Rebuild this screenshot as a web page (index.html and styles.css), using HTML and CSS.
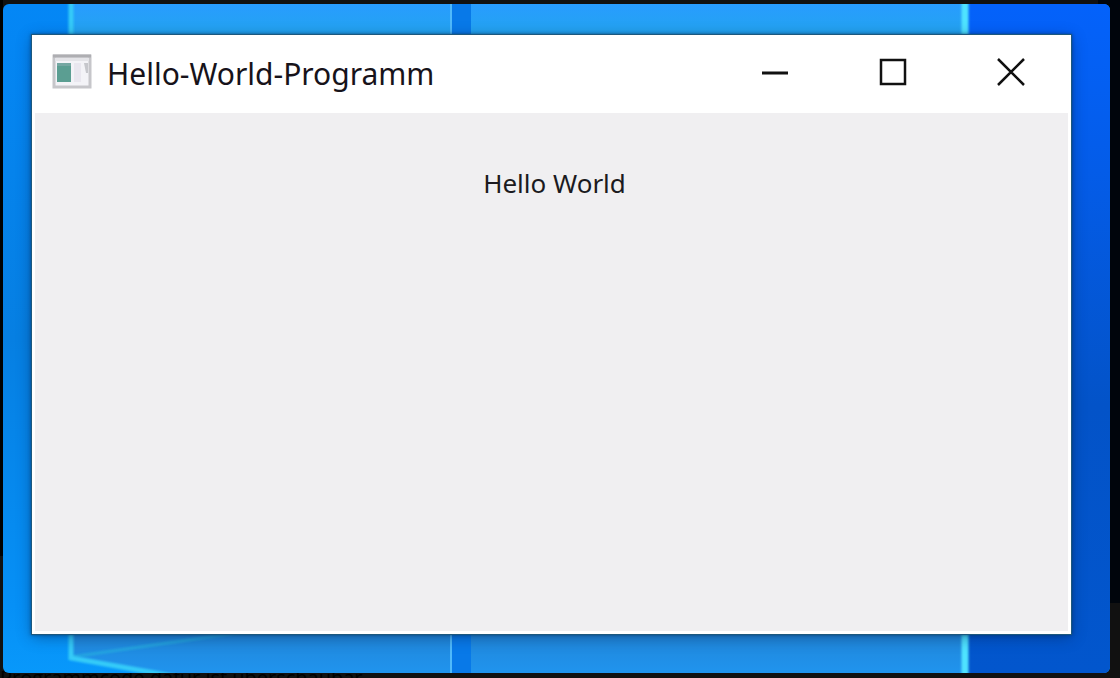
FILE: index.html
```html
<!DOCTYPE html>
<html lang="de">
<head>
<meta charset="utf-8">
<meta name="viewport" content="width=device-width, initial-scale=1">
<title>Hello-World-Programm</title>
<link rel="stylesheet" href="styles.css">
</head>
<body>
<div class="page">
  <main class="desktop">
    <svg class="wallpaper" viewBox="0 0 1107 669" preserveAspectRatio="none" aria-hidden="true">
      <defs>
        <linearGradient id="left" x1="0" y1="0" x2="0" y2="1">
          <stop offset="0" stop-color="#0487f6"/>
          <stop offset="0.5" stop-color="#067fe2"/>
          <stop offset="0.9" stop-color="#0690f6"/>
          <stop offset="1" stop-color="#0898fb"/>
        </linearGradient>
        <linearGradient id="pane" x1="0" y1="0" x2="0" y2="1">
          <stop offset="0" stop-color="#289cff"/>
          <stop offset="0.05" stop-color="#22a5ee"/>
          <stop offset="0.95" stop-color="#2088dc"/>
          <stop offset="1" stop-color="#2094ee"/>
        </linearGradient>
        <linearGradient id="right" x1="0" y1="0" x2="0" y2="1">
          <stop offset="0" stop-color="#0462fb"/>
          <stop offset="0.25" stop-color="#045ce8"/>
          <stop offset="0.6" stop-color="#0353c8"/>
          <stop offset="1" stop-color="#0256cd"/>
        </linearGradient>
        <filter id="soft" filterUnits="userSpaceOnUse" x="0" y="-10" width="1107" height="690"><feGaussianBlur stdDeviation="1"/></filter>
      </defs>
      <rect width="1107" height="669" fill="url(#left)"/>
      <path d="M68 0H963V669H160L68 653Z" fill="url(#pane)"/>
      <rect x="447" width="2" height="669" fill="#4fb9fb"/>
      <rect x="449" width="19" height="669" fill="#0879e8"/>
      <rect x="963" width="144" height="669" fill="url(#right)"/>
      <path d="M68 653L240 628" stroke="#28b5df" stroke-width="3" fill="none" opacity="0.6" filter="url(#soft)"/>
      <path d="M68 -5V654L180 674" stroke="#35cbf8" stroke-width="5" fill="none" filter="url(#soft)"/>
      <path d="M962 -5V675" stroke="#4fe3ff" stroke-width="7" fill="none" filter="url(#soft)"/>
    </svg>
    <section class="window" aria-label="Hello-World-Programm">
      <header class="titlebar">
        <svg class="app-icon" viewBox="0 0 40 36" aria-hidden="true">
          <rect x="2" y="2" width="36" height="31" fill="#f3f3f7" stroke="#c6c6ca" stroke-width="3"/>
          <path d="M1 2H39" stroke="#aeaeb2" stroke-width="3"/>
          <rect x="3" y="4" width="34" height="3" fill="#e4e4e8"/>
          <rect x="5" y="9" width="14" height="19" fill="#5b9e92"/>
          <path d="M5 9H19V12H5Z" fill="#75a7a2"/>
          <rect x="22" y="9" width="7" height="19" fill="#e9e7ef"/>
          <path d="M32 9H36V19H34Z" fill="#c6c7cc"/>
        </svg>
        <h1 class="title">Hello-World-Programm</h1>
        <div class="controls">
          <button class="control" type="button" aria-label="Minimieren">
            <svg viewBox="0 0 28 28" aria-hidden="true"><path d="M1 15H27" stroke-width="3"/></svg>
          </button>
          <button class="control" type="button" aria-label="Maximieren">
            <svg viewBox="0 0 28 28" aria-hidden="true"><rect x="2" y="2" width="24" height="24"/></svg>
          </button>
          <button class="control" type="button" aria-label="Schließen">
            <svg viewBox="0 0 28 28" aria-hidden="true"><path d="M1 1L27 27M27 1L1 27"/></svg>
          </button>
        </div>
      </header>
      <div class="content">
        <p class="message">Hello World</p>
      </div>
    </section>
  </main>
  <p class="caption">Programmcode dafür ist überschaubar</p>
</div>
</body>
</html>
```
FILE: styles.css
```css
* {
  box-sizing: border-box;
}

body {
  margin: 0;
  background: #111111;
  font-family: "Noto Sans", "Open Sans", sans-serif;
}

.page {
  display: flex;
  flex-direction: column;
  height: 100vh;
  padding: 4px 10px 5px 3px;
  overflow: hidden;
  position: relative;
  background:
    linear-gradient(#000000, #000000) left top / 3px 82% no-repeat,
    linear-gradient(#00050c, #00050c) right top / 22px 89% no-repeat,
    #111111;
}

.desktop {
  flex: 1;
  display: flex;
  position: relative;
  z-index: 1;
  padding: 31px 39px 39px 29px;
  border-radius: 6px;
  overflow: hidden;
}

.wallpaper {
  position: absolute;
  inset: 0;
  width: 100%;
  height: 100%;
}

.window {
  flex: 1;
  display: flex;
  flex-direction: column;
  position: relative;
  background: #ffffff;
  box-shadow: 0 0 0 1px #1c587e, 0 0 3px 1px rgba(10, 50, 90, 0.7), 0 3px 14px rgba(0, 30, 80, 0.45);
}

.titlebar {
  display: flex;
  align-items: center;
  height: 78px;
  padding: 0 1px 4px 20px;
}

.app-icon {
  flex: none;
  width: 40px;
  height: 36px;
}

.title {
  flex: 1;
  margin: 0;
  padding: 4px 0 0 15px;
  color: #17131a;
  font-size: 30px;
  font-weight: 400;
  line-height: 40px;
}

.controls {
  display: flex;
  align-self: stretch;
}

.control {
  display: grid;
  place-items: center;
  width: 118px;
  padding: 0;
  border: 0;
  background: transparent;
}

.control svg {
  width: 28px;
  height: 28px;
  fill: none;
  stroke: #111111;
  stroke-width: 2.500;
}

.content {
  flex: 1;
  margin: 0 3px 3px;
  padding-top: 52px;
  background: #f0eff1;
  text-align: center;
}

.message {
  margin: 0;
  padding-left: 6px;
  color: #1b1a20;
  font-size: 26px;
  line-height: 36px;
}

.caption {
  position: absolute;
  left: 0;
  bottom: -12px;
  margin: 0;
  color: #000000;
  font-family: "Open Sans", "Noto Sans", sans-serif;
  font-size: 20px;
  line-height: 24px;
  white-space: nowrap;
}
```
